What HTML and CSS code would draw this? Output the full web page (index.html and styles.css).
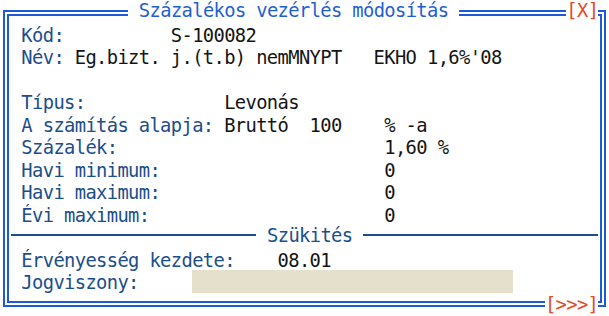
FILE: index.html
```html
<!DOCTYPE html>
<html lang="hu">
<head>
	<meta charset="UTF-8">
	<title>Százalékos vezérlés módosítás</title>
	<link rel="stylesheet" href="styles.css">
</head>
<body>

<div class="screen">
	<!-- window frame with title and buttons sitting on the border -->
	<div class="title"> Százalékos vezérlés módosítás </div>
	<div class="btn closeBtn">[X]</div>
	<div class="btn moreBtn">[&gt;&gt;&gt;]</div>

	<div class="frame">
		<div class="row"><span class="lbl">Kód:</span>          <span class="val">S-100082</span></div>
		<div class="row"><span class="lbl">Név:</span> <span class="val">Eg.bizt. j.(t.b) nemMNYPT   EKHO 1,6%'08</span></div>
		<div class="row"> </div>
		<div class="row"><span class="lbl">Típus:</span>             <span class="val">Levonás</span></div>
		<div class="row"><span class="lbl">A számítás alapja:</span> <span class="val">Bruttó  100    % -a</span></div>
		<div class="row"><span class="lbl">Százalék:</span>                         <span class="val">1,60 %</span></div>
		<div class="row"><span class="lbl">Havi minimum:</span>                     <span class="val">0</span></div>
		<div class="row"><span class="lbl">Havi maximum:</span>                     <span class="val">0</span></div>
		<div class="row"><span class="lbl">Évi maximum:</span>                      <span class="val">0</span></div>
		<div class="row divider">
			<span class="rule ruleLeft"></span>
			<span class="lbl sectionName"> Szükités </span>
			<span class="rule ruleRight"></span>
		</div>
		<div class="row"><span class="lbl">Érvényesség kezdete:</span>    <span class="val">08.01</span></div>
		<div class="row"><span class="lbl">Jogviszony:</span>     <span class="field"></span></div>
	</div>
</div>

</body>
</html>
```

FILE: styles.css
```css
body {
	margin: 0;
	background-color: #fff;
	font-family: "DejaVu Sans Mono", monospace;
}
/* 57 columns x 14 rows text screen, one cell = 10.684px x 22.5px */
.screen {
	position: relative;
	width: 609px;
	height: 316px;
	overflow: hidden;
	font-size: 18.8px;
	letter-spacing: -0.634px;
}
.frame {
	margin: 10px 3px 0 3px;
	height: 297px;
	box-sizing: border-box;
	border: 6px double #1c5ad8;
	padding: 8.9px 1.7px 0 12.37px;
}
.row {
	height: 22.5px;
	line-height: 22.5px;
	white-space: pre;
}
.lbl {
	color: #1b4e8c;
}
.val {
	color: #141414;
}
.field {
	display: inline-block;
	vertical-align: top;
	width: 320.5px;
	height: 22.5px;
	margin-top: -2.4px;
	background-color: #e5e0cb;
}
.divider {
	display: flex;
	align-items: flex-start;
	margin-left: -10.684px;
}
.rule {
	height: 2px;
	margin-top: 6.2px;
	background-color: #1b4e8c;
}
.ruleLeft {
	width: 245.7px;
}
.ruleRight {
	flex: 1;
}
.sectionName {
	margin-top: -2.4px;
}
.title {
	position: absolute;
	top: 0;
	left: 128.2px;
	height: 22.5px;
	line-height: 22.5px;
	white-space: pre;
	color: #1f5fd1;
	background-color: #fff;
}
.btn {
	position: absolute;
	line-height: 22.5px;
	color: #e64a22;
	background-color: #fff;
}
.closeBtn {
	top: 0;
	left: 566.3px;
}
.moreBtn {
	top: 293.5px;
	left: 544.9px;
}
```
